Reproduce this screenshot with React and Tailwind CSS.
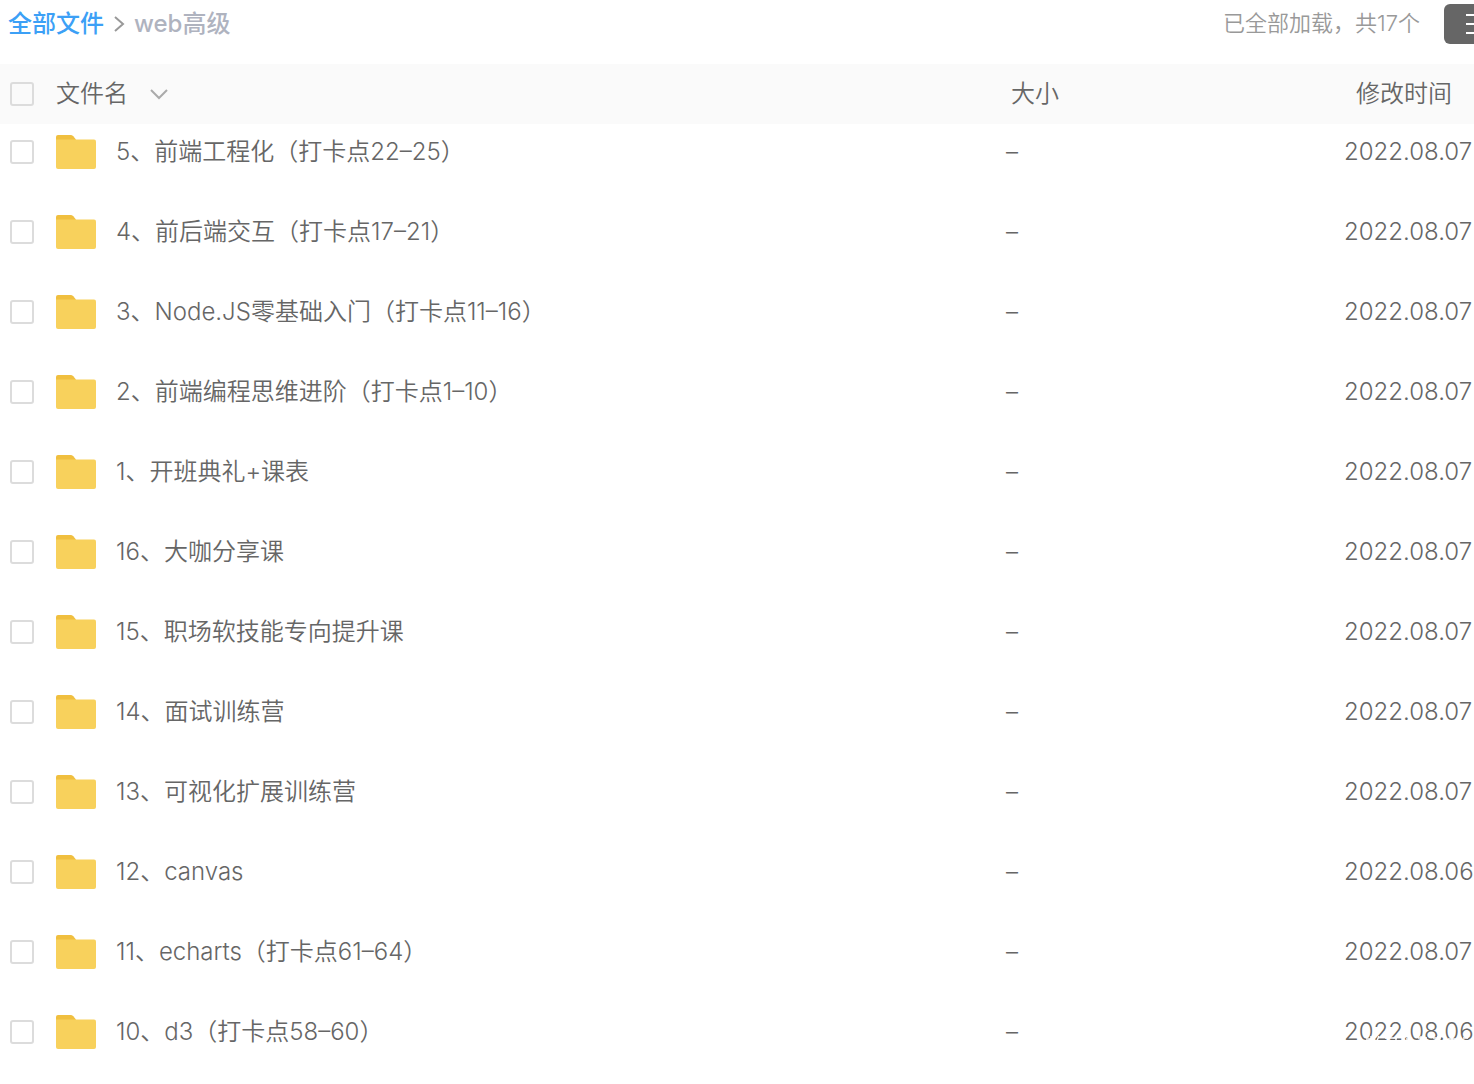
const files = [
  { name: "5、前端工程化（打卡点22–25）", size: "–", date: "2022.08.07" },
  { name: "4、前后端交互（打卡点17–21）", size: "–", date: "2022.08.07" },
  { name: "3、Node.JS零基础入门（打卡点11–16）", size: "–", date: "2022.08.07" },
  { name: "2、前端编程思维进阶（打卡点1–10）", size: "–", date: "2022.08.07" },
  { name: "1、开班典礼+课表", size: "–", date: "2022.08.07" },
  { name: "16、大咖分享课", size: "–", date: "2022.08.07" },
  { name: "15、职场软技能专向提升课", size: "–", date: "2022.08.07" },
  { name: "14、面试训练营", size: "–", date: "2022.08.07" },
  { name: "13、可视化扩展训练营", size: "–", date: "2022.08.07" },
  { name: "12、canvas", size: "–", date: "2022.08.06" },
  { name: "11、echarts（打卡点61–64）", size: "–", date: "2022.08.07" },
  { name: "10、d3（打卡点58–60）", size: "–", date: "2022.08.06", marked: true },
];

function FolderIcon() {
  return (
    <svg width="40" height="40" viewBox="0 0 40 40" className="block shrink-0" aria-hidden="true">
      <path d="M0 5a2 2 0 0 1 2-2h12.500a4 4 0 0 1 2.800 1.200L20 7.500V14H0Z" fill="#f0bf3f" />
      <path d="M0 7.500h38a2 2 0 0 1 2 2V35a2 2 0 0 1-2 2H2a2 2 0 0 1-2-2Z" fill="#f8d15c" />
    </svg>
  );
}

function Checkbox({ label }) {
  return (
    <input
      type="checkbox"
      aria-label={label}
      className="block w-6 h-6 ml-[10px] appearance-none border-2 border-[#dcdcdc] rounded-[3px] cursor-pointer checked:bg-[#3ca0f6]"
    />
  );
}

function Breadcrumb() {
  return (
    <nav className="flex items-center h-12 pl-2 font-medium">
      <a href="#" className="text-[#3ca0f6]">
        全部文件
      </a>
      <svg width="30" height="24" viewBox="0 0 30 24" fill="none" stroke="#999" strokeWidth="2" aria-hidden="true">
        <path d="M11 5l8 7-8 7" />
      </svg>
      <span className="text-[#afb3bf]">web高级</span>
    </nav>
  );
}

// white watermark strokes that run over the lower edge of the date
function Watermark() {
  return (
    <svg
      width="130"
      height="12"
      viewBox="0 0 130 12"
      fill="none"
      stroke="#fff"
      strokeWidth="1.500"
      className="absolute left-0 bottom-1"
      aria-hidden="true"
    >
      <path d="M17 2v8M22 3h8M27 0v10M35 0l-3 7M41 2h12M44 0v9M52 0v7M62 3h6M74 2h9M77 0v9M89 2h8M94 0v8M104 3h9M108 0v9M119 2h5" />
    </svg>
  );
}

export default function App() {
  return (
    <div className="overflow-hidden bg-white text-2xl font-[350] text-[#666] font-['Inter','Noto_Sans_CJK_SC',sans-serif]">
      <header className="flex justify-between h-16">
        <Breadcrumb />
        <div className="flex">
          <span className="flex items-center h-12 mr-6 text-[22px] text-[#999]">已全部加载，共17个</span>
          <button
            aria-label="列表模式"
            className="flex items-center justify-end w-[30px] h-10 mt-1 bg-[#666] rounded-l-md cursor-pointer"
          >
            <svg width="8" height="40" viewBox="0 0 8 40" fill="none" stroke="#fff" strokeWidth="2" aria-hidden="true">
              <path d="M0 11h8M0 20h8M0 29h8" />
            </svg>
          </button>
        </div>
      </header>

      <table className="w-full table-fixed text-left">
        <thead>
          <tr className="h-[60px] bg-[#fafafa]">
            <th className="w-14">
              <Checkbox label="全选" />
            </th>
            <th className="font-[350]">
              <button className="flex items-center gap-5 cursor-pointer">
                文件名
                <svg width="20" height="20" viewBox="0 0 20 20" fill="none" stroke="#aaa" strokeWidth="2" aria-hidden="true">
                  <path d="M3 6l8 8 8-8" />
                </svg>
              </button>
            </th>
            <th className="w-[338px] pl-[5px] font-[350]">大小</th>
            <th className="w-[130px] pl-3 font-[350]">修改时间</th>
          </tr>
        </thead>
        <tbody>
          {files.map((file) => (
            <tr key={file.name} className="h-20 align-top">
              <td className="pt-4">
                <Checkbox label={file.name} />
              </td>
              <td className="pt-2">
                <div className="flex items-center gap-5 h-10">
                  <FolderIcon />
                  <span className="truncate">{file.name}</span>
                </div>
              </td>
              <td className="pt-2 leading-10">{file.size}</td>
              <td className="pt-2 leading-10 whitespace-nowrap">
                <div className="relative h-10">
                  {file.date}
                  {file.marked && <Watermark />}
                </div>
              </td>
            </tr>
          ))}
        </tbody>
      </table>
    </div>
  );
}
